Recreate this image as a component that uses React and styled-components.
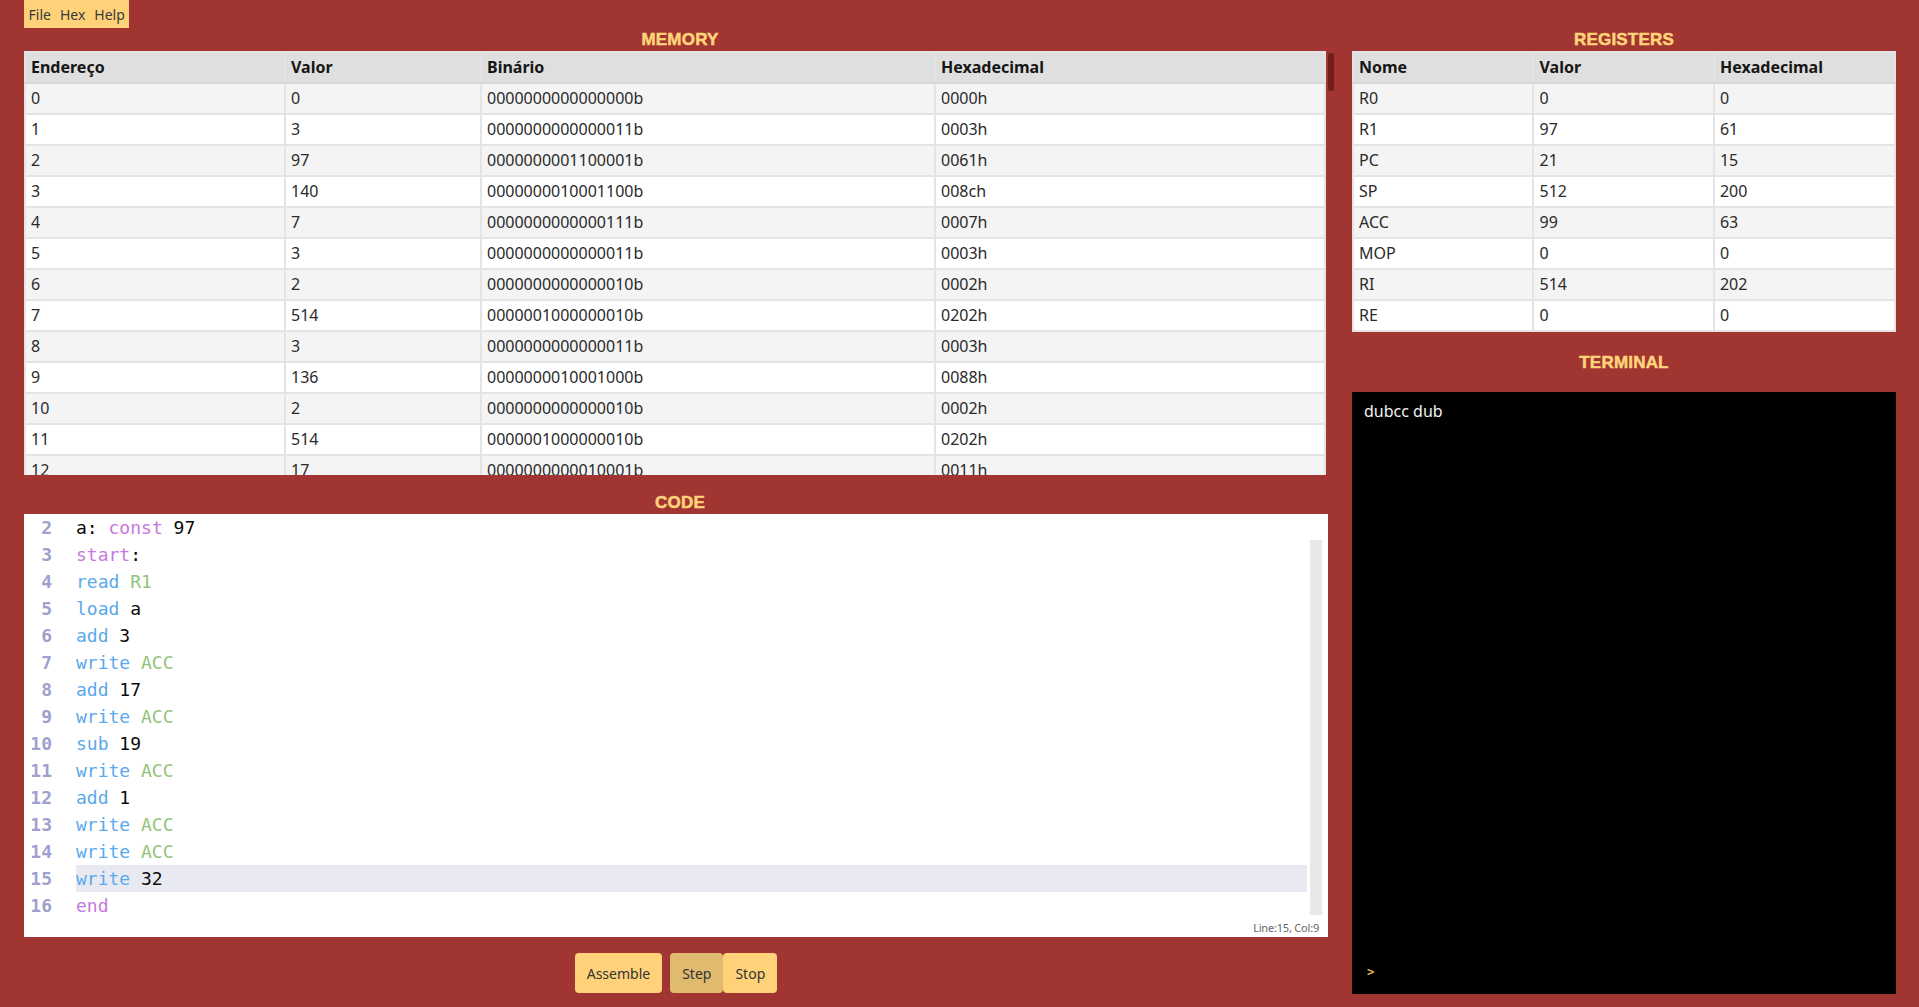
import React from "react";
import styled, { createGlobalStyle } from "styled-components";

const GlobalStyle = createGlobalStyle`
  html, body {
    margin: 0;
    padding: 0;
    background: #a13532;
    height: 1007px;
    overflow: hidden;
  }
  body {
    font-family: "Noto Sans", "Open Sans", sans-serif;
  }
`;

const toBin = (n) => n.toString(2).padStart(16, "0") + "b";
const toHex = (n) => n.toString(16).padStart(4, "0") + "h";

const program = [0, 3, 97, 140, 7, 3, 2, 514, 3, 136, 2, 514, 17, 514, 3, 2, 514, 19, 514, 3, 1, 514, 3, 514, 3, 514, 32, 0];
const memory = Array.from({ length: 150 }, (_, i) => (i < program.length ? program[i] : 0));

const registers = [
  ["R0", "0", "0"],
  ["R1", "97", "61"],
  ["PC", "21", "15"],
  ["SP", "512", "200"],
  ["ACC", "99", "63"],
  ["MOP", "0", "0"],
  ["RI", "514", "202"],
  ["RE", "0", "0"],
];

// each token: [text, kind]
const code = [
  [2, [["a:", "id"], [" "], ["const", "kw"], [" "], ["97", "id"]]],
  [3, [["start", "kw"], [":", "id"]]],
  [4, [["read", "op"], [" "], ["R1", "reg"]]],
  [5, [["load", "op"], [" "], ["a", "id"]]],
  [6, [["add", "op"], [" "], ["3", "id"]]],
  [7, [["write", "op"], [" "], ["ACC", "reg"]]],
  [8, [["add", "op"], [" "], ["17", "id"]]],
  [9, [["write", "op"], [" "], ["ACC", "reg"]]],
  [10, [["sub", "op"], [" "], ["19", "id"]]],
  [11, [["write", "op"], [" "], ["ACC", "reg"]]],
  [12, [["add", "op"], [" "], ["1", "id"]]],
  [13, [["write", "op"], [" "], ["ACC", "reg"]]],
  [14, [["write", "op"], [" "], ["ACC", "reg"]]],
  [15, [["write", "op"], [" "], ["32", "id"]]],
  [16, [["end", "kw"]]],
];

const tokenColors = {
  id: "#0a0a0a",
  kw: "#c678dd",
  op: "#5aa9ec",
  reg: "#92c47a",
};

function App() {
  return (
    <Page>
      <GlobalStyle />
      <MenuBar>
        <MenuItem>File</MenuItem>
        <MenuItem>Hex</MenuItem>
        <MenuItem>Help</MenuItem>
      </MenuBar>
      <Main>
        <LeftColumn>
          <Title>MEMORY</Title>
          <MemoryPanel>
            <MemoryViewport>
              <Table>
                <colgroup>
                  <col style={{ width: 260 }} />
                  <col style={{ width: 196 }} />
                  <col style={{ width: 454 }} />
                  <col />
                </colgroup>
                <thead>
                  <tr>
                    <Th>Endereço</Th>
                    <Th>Valor</Th>
                    <Th>Binário</Th>
                    <Th>Hexadecimal</Th>
                  </tr>
                </thead>
                <tbody>
                  {memory.map((v, i) => (
                    <tr key={i}>
                      <Td>{i}</Td>
                      <Td>{v}</Td>
                      <Td>{toBin(v)}</Td>
                      <Td>{toHex(v)}</Td>
                    </tr>
                  ))}
                </tbody>
              </Table>
            </MemoryViewport>
            <ScrollBar>
              <Thumb />
            </ScrollBar>
          </MemoryPanel>
          <Title $top={16}>CODE</Title>
          <Editor>
            <EditorBody>
              <Gutter>
                {code.map(([n]) => (
                  <LineNo key={n}>{n}</LineNo>
                ))}
              </Gutter>
              <CodeArea>
                {code.map(([n, tokens]) => (
                  <CodeLine key={n} $active={n === 15}>
                    {tokens.map(([t, kind], j) => (
                      <Tok key={j} $color={tokenColors[kind] || "#111"}>
                        {t}
                      </Tok>
                    ))}
                  </CodeLine>
                ))}
              </CodeArea>
              <ScrollTrack />
            </EditorBody>
            <Status>Line:15, Col:9</Status>
          </Editor>
          <Buttons>
            <Button $gap>Assemble</Button>
            <Button $active>Step</Button>
            <Button>Stop</Button>
          </Buttons>
        </LeftColumn>
        <RightColumn>
          <Title>REGISTERS</Title>
          <Table>
            <colgroup>
              <col style={{ width: "33.3%" }} />
              <col style={{ width: "33.3%" }} />
              <col />
            </colgroup>
            <thead>
              <tr>
                <Th>Nome</Th>
                <Th>Valor</Th>
                <Th>Hexadecimal</Th>
              </tr>
            </thead>
            <tbody>
              {registers.map(([n, v, h]) => (
                <tr key={n}>
                  <Td>{n}</Td>
                  <Td>{v}</Td>
                  <Td>{h}</Td>
                </tr>
              ))}
            </tbody>
          </Table>
          <Title $top={19} $bottom={18}>TERMINAL</Title>
          <Terminal>
            <TermText>dubcc dub</TermText>
            <Prompt>&gt;</Prompt>
          </Terminal>
        </RightColumn>
      </Main>
    </Page>
  );
}

const Page = styled.div`
  height: 1007px;
  display: flex;
  flex-direction: column;
`;

const MenuBar = styled.div`
  display: flex;
  align-self: flex-start;
  margin-left: 24px;
  height: 28px;
  align-items: center;
  background: #ffd27a;
`;

const MenuItem = styled.span`
  padding: 0 4.5px;
  font-size: 14px;
  color: #3a3a3a;
`;

const Main = styled.div`
  display: grid;
  grid-template-columns: 1fr 544px;
  column-gap: 16px;
  padding: 0 23px 0 24px;
`;

const LeftColumn = styled.div`
  display: flex;
  flex-direction: column;
  min-width: 0;
`;

const RightColumn = styled.div`
  display: flex;
  flex-direction: column;
`;

const Title = styled.div`
  height: 23px;
  line-height: 23px;
  margin-top: ${(p) => p.$top || 0}px;
  margin-bottom: ${(p) => p.$bottom || 0}px;
  text-align: center;
  font-family: "Liberation Sans", Arial, sans-serif;
  font-weight: 700;
  font-size: 17px;
  color: #ffd479;
  letter-spacing: 0.2px;
  -webkit-text-stroke: 0.5px #ffd479;
`;

const MemoryPanel = styled.div`
  display: flex;
  height: 424px;
`;

const MemoryViewport = styled.div`
  flex: 1;
  min-width: 0;
  overflow: hidden;
`;

const ScrollBar = styled.div`
  width: 10px;
  box-sizing: border-box;
  padding: 2px;
`;

const Thumb = styled.div`
  height: 38px;
  border-radius: 3px;
  background: #741c1a;
`;

const Table = styled.table`
  width: 100%;
  border-collapse: collapse;
  table-layout: fixed;
  font-size: 16px;
  line-height: 21px;
  background: #fff;
  tbody tr:nth-child(odd) td {
    background: #f4f4f4;
  }
`;

const Th = styled.th`
  text-align: left;
  font-weight: 700;
  color: #161616;
  background: #dfdfdf;
  padding: 4px 5px;
  border: 2px solid #e4e4e4;
  border-bottom-color: #d6d6d6;
`;

const Td = styled.td`
  color: #2a2a2a;
  padding: 4px 5px;
  border: 2px solid #e4e4e4;
  white-space: nowrap;
  overflow: hidden;
`;

const Editor = styled.div`
  width: calc(100% - 8px);
  height: 423px;
  background: #fff;
  display: flex;
  flex-direction: column;
`;

const EditorBody = styled.div`
  display: flex;
  height: 407px;
`;

const Gutter = styled.div`
  width: 28px;
  padding-right: 24px;
  text-align: right;
  font-family: "DejaVu Sans Mono", monospace;
  font-size: 18px;
  line-height: 27px;
  font-weight: 700;
`;

const LineNo = styled.div`
  color: #a0a0cf;
`;

const CodeArea = styled.div`
  flex: 1;
  font-family: "DejaVu Sans Mono", monospace;
  font-size: 18px;
  line-height: 27px;
`;

const CodeLine = styled.div`
  height: 27px;
  white-space: pre;
  background: ${(p) => (p.$active ? "#e9e9f2" : "transparent")};
`;

const Tok = styled.span`
  color: ${(p) => p.$color};
`;

const ScrollTrack = styled.div`
  width: 12px;
  height: 375px;
  margin: 26px 6px 0 3px;
  background: #e8e8e8;
`;

const Status = styled.div`
  text-align: right;
  padding-right: 9px;
  font-size: 11px;
  line-height: 14px;
  color: #666;
  letter-spacing: -0.2px;
`;

const Buttons = styled.div`
  display: flex;
  justify-content: center;
  margin-top: 16px;
  padding-right: 8px;
`;

const Button = styled.button`
  height: 40px;
  padding: 0 12px;
  margin-right: ${(p) => (p.$gap ? 8 : 0)}px;
  border: none;
  border-radius: 4px;
  background: ${(p) => (p.$active ? "#dfba6f" : "#ffd27a")};
  color: #333;
  font-family: "Noto Sans", "Open Sans", sans-serif;
  font-size: 14px;
  cursor: pointer;
`;

const Terminal = styled.div`
  height: 602px;
  box-sizing: border-box;
  background: #000;
  padding: 8px 12px 15px;
  display: flex;
  flex-direction: column;
  justify-content: space-between;
`;

const TermText = styled.div`
  color: #f2f2f2;
  font-size: 16px;
  line-height: 22px;
`;

const Prompt = styled.div`
  color: #e7b84f;
  font-family: "DejaVu Sans Mono", monospace;
  font-size: 12px;
  font-weight: 700;
  padding-left: 3px;
`;

export default App;
